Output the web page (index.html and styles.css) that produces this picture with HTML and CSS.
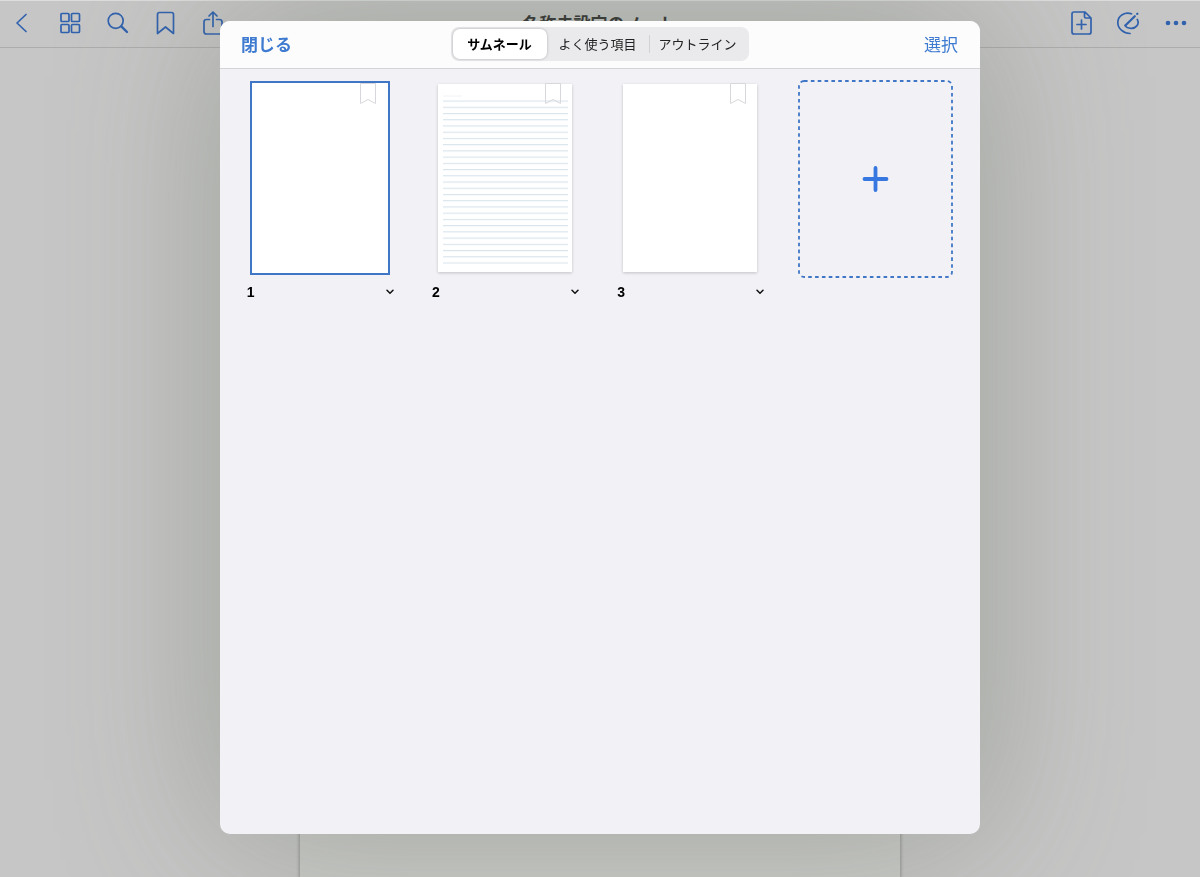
FILE: index.html
```html
<!DOCTYPE html>
<html lang="ja">
<head>
    <meta charset="UTF-8">
    <meta name="viewport" content="width=device-width, initial-scale=1.0">
    <title>名称未設定のノート</title>
    <link rel="stylesheet" href="styles.css">
</head>
<body>
    <header class="toolbar">
        <div class="tools">
            <button type="button" class="tool" aria-label="戻る">
                <svg viewBox="0 0 24 24"><path d="M16 3.500 7 12 16 20.500"/></svg>
            </button>
            <button type="button" class="tool" aria-label="サムネール">
                <svg viewBox="0 0 24 24"><rect x="3" y="2.500" width="8" height="8" rx="1"/><rect x="13.500" y="2.500" width="8" height="8" rx="1"/><rect x="3" y="13.500" width="8" height="8" rx="1"/><rect x="13.500" y="13.500" width="8" height="8" rx="1"/></svg>
            </button>
            <button type="button" class="tool" aria-label="検索">
                <svg viewBox="0 0 24 24"><circle cx="9.700" cy="9.800" r="7.500"/><path d="M15.300 15.300 21 21" stroke-width="2.400"/></svg>
            </button>
            <button type="button" class="tool" aria-label="ブックマーク">
                <svg viewBox="0 0 24 24"><path d="M3.500 22.500V3.500Q3.500 1.500 5.500 1.500H17.500Q19.500 1.500 19.500 3.500V22.500L11.500 16Z"/></svg>
            </button>
            <button type="button" class="tool" aria-label="共有">
                <svg viewBox="0 0 24 24"><path d="M7.500 8.500H4.500Q2 8.500 2 11V20.500Q2 23 4.500 23H17.500Q20 23 20 20.500V11Q20 8.500 17.500 8.500H14.500M11 15.500V1M7 5 11 1 15 5"/></svg>
            </button>
        </div>
        <h1 class="note-title">名称未設定のノート</h1>
        <div class="tools tools-right">
            <button type="button" class="tool" aria-label="ページを追加">
                <svg viewBox="0 0 24 24"><path d="M17 1H6Q4 1 4 3V21Q4 23 6 23H21Q23 23 23 21V7ZM16.500 1V5.500Q16.500 7 18 7H23M13.500 9V18M9 13.500H18"/></svg>
            </button>
            <button type="button" class="tool" aria-label="閲覧モード">
                <svg viewBox="0 0 24 24"><path d="M15.500 2.800C9 .5 1.800 4.500 1.800 11.500C1.800 18 8 22.500 14 22.500M21.300 8.500C24 13.500 19.500 17.500 15 17.300C12 17.200 10 16 9.300 14.500"/><path d="M18.800 5.200 9.300 14.500M21.200 2.900 21.400 2.700" stroke-width="2.200"/></svg>
            </button>
            <button type="button" class="tool" aria-label="その他">
                <svg class="dots" viewBox="0 0 24 24"><circle cx="4" cy="12" r="2.300"/><circle cx="12" cy="12" r="2.300"/><circle cx="20" cy="12" r="2.300"/></svg>
            </button>
        </div>
    </header>
    <main class="canvas">
        <div class="sheet"></div>
    </main>

    <div class="overlay">
        <section class="dialog" role="dialog" aria-label="サムネール">
            <header class="dialog-header">
                <button type="button" class="text-button close">閉じる</button>
                <div class="segments" role="tablist">
                    <button type="button" class="segment active" role="tab" aria-selected="true">サムネール</button>
                    <button type="button" class="segment" role="tab" aria-selected="false">よく使う項目</button>
                    <button type="button" class="segment divided" role="tab" aria-selected="false">アウトライン</button>
                </div>
                <button type="button" class="text-button select">選択</button>
            </header>

            <div class="pages">
                <article class="page">
                    <div class="thumb selected">
                        <svg class="bookmark" viewBox="0 0 16 21"><path d="M.5 .5H15.500V20.500L8 16.500 .5 20.500Z"/></svg>
                    </div>
                    <div class="caption">
                        <span>1</span>
                        <button type="button" class="more" aria-label="1ページのメニュー"><svg viewBox="0 0 8 6"><path d="M1 1.200 4 4.200 7 1.200"/></svg></button>
                    </div>
                </article>
                <article class="page">
                    <div class="thumb">
                        <!-- ruled paper -->
                        <svg class="ruled" viewBox="0 0 134 188">
                            <defs>
                                <pattern id="rule" x="0" y="16.500" width="134" height="6.230" patternUnits="userSpaceOnUse">
                                    <path d="M0 .6H134" stroke="#d8e4ec" stroke-width="1.200"/>
                                </pattern>
                            </defs>
                            <path d="M5 12H24" stroke="#eef2f5"/>
                            <rect x="5" y="16" width="125" height="164" fill="url(#rule)"/>
                        </svg>
                        <svg class="bookmark" viewBox="0 0 16 21"><path d="M.5 .5H15.500V20.500L8 16.500 .5 20.500Z"/></svg>
                    </div>
                    <div class="caption">
                        <span>2</span>
                        <button type="button" class="more" aria-label="2ページのメニュー"><svg viewBox="0 0 8 6"><path d="M1 1.200 4 4.200 7 1.200"/></svg></button>
                    </div>
                </article>
                <article class="page">
                    <div class="thumb">
                        <svg class="bookmark" viewBox="0 0 16 21"><path d="M.5 .5H15.500V20.500L8 16.500 .5 20.500Z"/></svg>
                    </div>
                    <div class="caption">
                        <span>3</span>
                        <button type="button" class="more" aria-label="3ページのメニュー"><svg viewBox="0 0 8 6"><path d="M1 1.200 4 4.200 7 1.200"/></svg></button>
                    </div>
                </article>
                <button type="button" class="add-page" aria-label="ページを追加">
                    <svg viewBox="0 0 155 198"><rect class="dash" x="1" y="1" width="153" height="196" rx="5"/><path class="plus" d="M77.500 88V110M66.500 99H88.500"/></svg>
                </button>
            </div>
        </section>
    </div>
</body>
</html>
```
FILE: styles.css
```css
* {
    box-sizing: border-box;
}

body {
    margin: 0;
    min-height: 100vh;
    display: flex;
    flex-direction: column;
    background-color: #c6c6c6;
    font-family: "Liberation Sans", "Noto Sans CJK JP", sans-serif;
    color: #000;
}

button {
    padding: 0;
    border: none;
    background: none;
    font-family: inherit;
    cursor: pointer;
}

svg {
    display: block;
    fill: none;
}

/* Toolbar */
.toolbar {
    display: grid;
    grid-template-columns: 1fr auto 1fr;
    align-items: center;
    height: 48px;
    padding: 0 12px 2px 10px;
    border-top: 1px solid #dcdedd;
    border-bottom: 1px solid #adadad;
}

.tools {
    display: flex;
    gap: 24px;
}

.tools-right {
    justify-content: flex-end;
}

.tool svg {
    width: 24px;
    height: 24px;
    stroke: #3162ae;
    stroke-width: 1.7;
    stroke-linecap: round;
    stroke-linejoin: round;
}

.tool .dots {
    fill: #3162ae;
    stroke: none;
}

.note-title {
    margin: 0;
    padding-top: 4px;
    font-size: 17px;
    line-height: 24px;
    font-weight: bold;
    color: #333;
}

.canvas {
    flex: 1;
    display: flex;
    justify-content: center;
}

.sheet {
    width: 50%;
    background-color: #cacbc9;
    box-shadow: 0 0 3px 1px rgba(0, 0, 0, 0.25);
}

/* Dialog */
.overlay {
    position: fixed;
    inset: 0;
    display: flex;
    justify-content: center;
    padding: 21px 0 43px;
}

.dialog {
    width: 760px;
    max-width: 100%;
    background-color: #f1f1f6;
    border-radius: 10px;
    box-shadow: 0 0 160px rgba(95, 104, 85, 0.4);
}

.dialog-header {
    display: grid;
    grid-template-columns: 1fr auto 1fr;
    align-items: center;
    height: 48px;
    padding: 0 22px 1px 21px;
    background-color: #fcfcfd;
    border-bottom: 1px solid #d4d4d8;
    border-radius: 10px 10px 0 0;
}

.text-button {
    padding-top: 3px;
    font-size: 17px;
    line-height: 24px;
    color: #3e7bd0;
}

.close {
    justify-self: start;
    font-weight: bold;
}

.select {
    justify-self: end;
}

.segments {
    display: grid;
    grid-template-columns: 94px 102px 98px;
    padding: 2px;
    border-radius: 8px;
    background-color: #eaeaec;
}

.segment {
    height: 30px;
    padding-bottom: 2px;
    font-size: 13px;
    color: #222;
}

.segment.active {
    background-color: #fff;
    border-radius: 7px;
    box-shadow: 0 0 3px rgba(0, 0, 0, 0.25);
    font-weight: bold;
    color: #000;
}

.segment.divided {
    background: linear-gradient(#d2d2d6, #d2d2d6) no-repeat left center / 1px 18px;
}

/* Page thumbnails */
.pages {
    display: grid;
    grid-template-columns: repeat(4, 1fr);
    justify-items: center;
    padding: 11px 12px 12px 7px;
}

.page {
    display: flex;
    flex-direction: column;
    align-items: center;
    gap: 10px;
    padding-top: 4px;
}

.thumb {
    position: relative;
    width: 134px;
    height: 188px;
    background-color: #fff;
    box-shadow: 0 1px 3px rgba(0, 0, 0, 0.2);
}

.thumb.selected {
    box-shadow: 0 0 0 1px #fff, 0 0 0 3px #3f77c6;
}

.bookmark {
    position: absolute;
    top: -1px;
    right: 11px;
    width: 16px;
    height: 21px;
    stroke: #d8d8dc;
}

.ruled {
    width: 134px;
    height: 188px;
}

.caption {
    display: flex;
    justify-content: space-between;
    align-items: center;
    width: 148px;
    padding-left: 1px;
    font-size: 14px;
    line-height: 20px;
    font-weight: bold;
}

.more svg {
    width: 8px;
    height: 6px;
    stroke: #111;
    stroke-width: 1.5;
    stroke-linecap: round;
}

.add-page {
    align-self: start;
}

.add-page svg {
    width: 155px;
    height: 198px;
}

.dash {
    stroke: #3f77c6;
    stroke-width: 1.8;
    stroke-dasharray: 3.6 3.25;
}

.plus {
    stroke: #3678e0;
    stroke-width: 3.8;
    stroke-linecap: round;
}
```
